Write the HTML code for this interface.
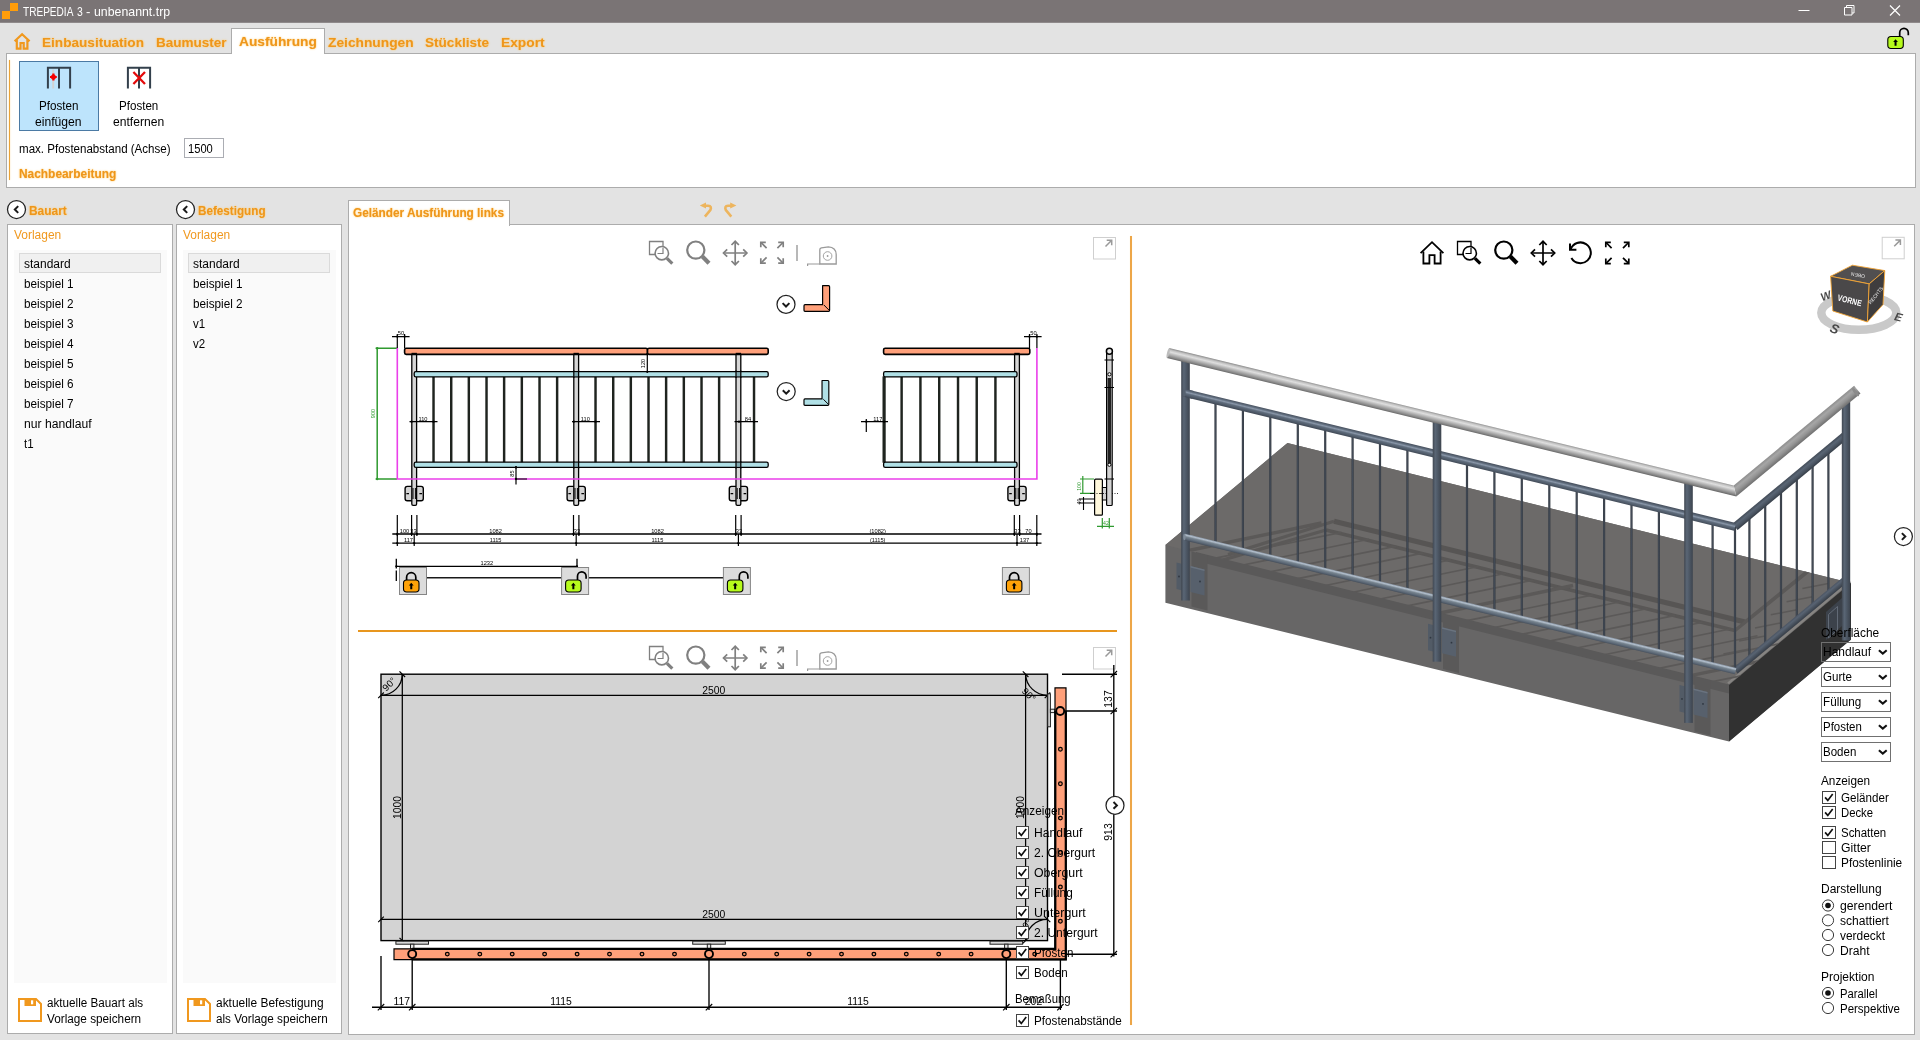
<!DOCTYPE html>
<html lang="de">
<head>
<meta charset="utf-8">
<title>TREPEDIA 3 - unbenannt.trp</title>
<style>
html,body{margin:0;padding:0;}
body{width:1920px;height:1040px;overflow:hidden;background:#e3e3e3;font-family:"Liberation Sans","DejaVu Sans",sans-serif;color:#000;}
#app{will-change:transform;position:relative;width:1920px;height:1040px;overflow:hidden;background:#e3e3e3;}
#app div,#app span.t,#app svg{position:absolute;box-sizing:border-box;}
span.t{white-space:pre;line-height:1;font-size:12px;transform-origin:0 0;}
.o{color:#f0981e;}
.ob{color:#ee961c;font-weight:700;text-shadow:0 0 2px rgba(255,200,100,.9),0 0 1px rgba(255,214,130,.7);}
.panel{background:#fff;border:1px solid #acacac;}
svg{overflow:visible;}
svg text{font-family:"Liberation Sans","DejaVu Sans",sans-serif;}

</style>
</head>
<body>
<div id="app">
<div style="left:0px;top:0px;width:1920px;height:23px;background:#7a7475;border-bottom:1px solid #8f8a8b;"></div>
<span class="t" style="left:23.4px;top:6px;font-size:12.7px;transform:scaleX(0.794);color:#ffffff;">TREPEDIA </span>
<span class="t" style="left:77px;top:6px;font-size:12.7px;transform:scaleX(0.821);color:#ffffff;">3 </span>
<span class="t" style="left:86.4px;top:6px;font-size:12.7px;transform:scaleX(1.04);color:#ffffff;">- </span>
<span class="t" style="left:93.8px;top:6px;font-size:12.7px;transform:scaleX(0.972);color:#ffffff;">unbenannt.trp</span>
<div class="panel" style="left:6px;top:53px;width:1910px;height:135px;"></div>
<div style="left:231px;top:28px;width:94px;height:26px;background:#fff;border:1px solid #acacac;border-bottom:none;"></div>
<span class="t ob" style="left:42px;top:36px;font-size:13.5px;transform:scaleX(1.007);">Einbausituation</span>
<span class="t ob" style="left:156.4px;top:36px;font-size:13.5px;transform:scaleX(1.001);">Baumuster</span>
<span class="t ob" style="left:239.1px;top:35px;font-size:13.5px;transform:scaleX(1.018);">Ausführung</span>
<span class="t ob" style="left:328.4px;top:36px;font-size:13.5px;transform:scaleX(1.019);">Zeichnungen</span>
<span class="t ob" style="left:425.4px;top:36px;font-size:13.5px;transform:scaleX(1.005);">Stückliste</span>
<span class="t ob" style="left:501.4px;top:36px;font-size:13.5px;transform:scaleX(1.02);">Export</span>
<div style="left:9px;top:60px;width:1.4px;height:120px;background:#eaa338;box-shadow:0 0 1.5px #f6d08a;"></div>
<div style="left:19px;top:61px;width:80px;height:70.4px;background:#bde4fc;border:1px solid #4b7aa4;"></div>
<span class="t" style="left:39px;top:100px;transform:scaleX(0.971);">Pfosten</span>
<span class="t" style="left:35.4px;top:116px;transform:scaleX(1.012);">einfügen</span>
<span class="t" style="left:119.2px;top:100px;transform:scaleX(0.966);">Pfosten</span>
<span class="t" style="left:113.2px;top:116px;transform:scaleX(1.01);">entfernen</span>
<span class="t" style="left:19px;top:143px;transform:scaleX(0.963);">max. Pfostenabstand (Achse)</span>
<div style="left:184px;top:138px;width:40px;height:20px;background:#fff;border:1px solid #abadb3;"></div>
<span class="t" style="left:187.7px;top:143px;transform:scaleX(0.929);">1500</span>
<span class="t ob" style="left:19px;top:168px;transform:scaleX(0.992);">Nachbearbeitung</span>
<span class="t ob" style="left:28.8px;top:205px;transform:scaleX(0.994);">Bauart</span>
<span class="t ob" style="left:197.8px;top:205px;transform:scaleX(0.974);">Befestigung</span>
<div class="panel" style="left:7px;top:224px;width:166px;height:810px;"></div>
<div style="left:13.5px;top:249.5px;width:153px;height:733px;background:#fafafa;"></div>
<div style="left:19px;top:253px;width:142px;height:20px;background:#f0f0f0;border:1px solid #dadada;"></div>
<span class="t o" style="left:13.8px;top:229px;transform:scaleX(0.996);">Vorlagen</span>
<span class="t" style="left:23.8px;top:258px;transform:scaleX(0.998);">standard</span>
<span class="t" style="left:23.8px;top:278px;transform:scaleX(0.978);">beispiel 1</span>
<span class="t" style="left:23.8px;top:298px;transform:scaleX(0.978);">beispiel 2</span>
<span class="t" style="left:23.8px;top:318px;transform:scaleX(0.978);">beispiel 3</span>
<span class="t" style="left:23.8px;top:338px;transform:scaleX(0.978);">beispiel 4</span>
<span class="t" style="left:23.8px;top:358px;transform:scaleX(0.978);">beispiel 5</span>
<span class="t" style="left:23.8px;top:378px;transform:scaleX(0.978);">beispiel 6</span>
<span class="t" style="left:23.8px;top:398px;transform:scaleX(0.978);">beispiel 7</span>
<span class="t" style="left:23.8px;top:418px;transform:scaleX(1.013);">nur handlauf</span>
<span class="t" style="left:23.8px;top:438px;transform:scaleX(0.96);">t1</span>
<span class="t" style="left:46.9px;top:997px;transform:scaleX(0.973);">aktuelle Bauart als</span>
<span class="t" style="left:46.9px;top:1013px;transform:scaleX(0.98);">Vorlage speichern</span>
<div class="panel" style="left:176px;top:224px;width:166px;height:810px;"></div>
<div style="left:182.5px;top:249.5px;width:153px;height:733px;background:#fafafa;"></div>
<div style="left:188px;top:253px;width:142px;height:20px;background:#f0f0f0;border:1px solid #dadada;"></div>
<span class="t o" style="left:182.8px;top:229px;transform:scaleX(0.996);">Vorlagen</span>
<span class="t" style="left:192.8px;top:258px;transform:scaleX(0.998);">standard</span>
<span class="t" style="left:192.8px;top:278px;transform:scaleX(0.978);">beispiel 1</span>
<span class="t" style="left:192.8px;top:298px;transform:scaleX(0.978);">beispiel 2</span>
<span class="t" style="left:192.8px;top:318px;transform:scaleX(0.96);">v1</span>
<span class="t" style="left:192.8px;top:338px;transform:scaleX(0.96);">v2</span>
<span class="t" style="left:215.7px;top:997px;transform:scaleX(0.995);">aktuelle Befestigung</span>
<span class="t" style="left:215.7px;top:1013px;transform:scaleX(0.974);">als Vorlage speichern</span>
<div class="panel" style="left:348px;top:224px;width:1567px;height:811px;"></div>
<div style="left:348px;top:200px;width:162px;height:26px;background:#fff;border:1px solid #acacac;border-bottom:none;"></div>
<span class="t ob" style="left:353px;top:207px;transform:scaleX(0.983);">Geländer Ausführung links</span>
<div style="left:358px;top:630px;width:759px;height:2px;background:#e8961e;"></div>
<div style="left:1130px;top:236px;width:2.4px;height:789px;background:#eda648;box-shadow:0 0 1px #fbe3b5;"></div>
<svg width="1920" height="1040" viewBox="0 0 1920 1040" style="left:0;top:0">
<rect x="10" y="3" width="8" height="8" fill="#ff9d0a"/><rect x="2" y="11" width="8" height="8" fill="#ff9d0a"/>
<g stroke="#fff" stroke-width="1" fill="none"><path d="M1798.5 10.5 h11"/><path d="M1844.5 7.5 h7.5 v7.5 h-7.5 z M1846.5 7.5 v-2 h7.5 v7.5 h-2"/><path d="M1890 5.5 l10 10 M1900 5.5 l-10 10" stroke-width="1.2"/></g>
<path d="M14.6 41.2 l7.5 -7 l7.5 7 M16.8 40 v8.6 h3.7 v-5.6 h3.2 v5.6 h3.7 v-8.6" fill="none" stroke="#f0981e" stroke-width="2.2" stroke-linejoin="miter"/>
<g stroke="#000" stroke-width="1.2" fill="none"><path d="M1899.7 37 v-4.3 a4.3 4.3 0 0 1 8.6 0 v2.6" stroke-width="1.7"/><rect x="1887.8" y="36.5" width="15.5" height="12" rx="3.2" fill="#b6fb1c" stroke-width="1.1"/><path d="M1895.55 39.3 l2.4 2.8 h-1.4 v3.6 h-2 v-3.6 h-1.4 z" fill="#000" stroke="none"/></g>
<path d="M53.2 69.5 v19" stroke="#d2d2d2" stroke-width="1.9"/><g fill="none" stroke="#33404c" stroke-width="2"><path d="M47.9 88.6 v-20.9 h22.2 v20.9 M59 67.7 v20.9"/></g><circle cx="53.4" cy="77" r="2.5" fill="#f40000"/><path d="M50 77 h6.8 M53.4 73.6 v6.8" stroke="#f40000" stroke-width="2.2"/>
<g fill="none" stroke="#33404c" stroke-width="2"><path d="M127.9 88.6 v-20.9 h22.2 v20.9 M139 67.7 v20.9"/></g><path d="M133.4 72 l11.6 12 M145 72 l-11.6 12" stroke="#e40a0a" stroke-width="2.3"/>
<circle cx="16.5" cy="209.5" r="9" fill="#fff" stroke="#222" stroke-width="1.25"/><path d="M18.2 206.1 l-3.4 3.4 l3.4 3.4" fill="none" stroke="#1a1a1a" stroke-width="2"/>
<circle cx="185.5" cy="209.5" r="9" fill="#fff" stroke="#222" stroke-width="1.25"/><path d="M187.2 206.1 l-3.4 3.4 l3.4 3.4" fill="none" stroke="#1a1a1a" stroke-width="2"/>
<g fill="none" stroke="#edb55e" stroke-width="2.6" stroke-linejoin="round"><path d="M704.5 205.7 H708.2 Q712.2 206 710.3 210.2 L704.9 216.6"/><path d="M731.7 205.7 H728 Q724 206 725.9 210.2 L731.3 216.6"/></g><path d="M699.8 205.6 L706 202.6 V208.6 Z M736.4 205.6 L730.2 202.6 V208.6 Z" fill="#edb55e"/>
<g fill="none" stroke="#f0981e" stroke-width="2"><path d="M19 999 h17 l5 5 v17 h-22 z"/></g><rect x="24.5" y="999" width="11.5" height="7" fill="#f0981e"/><rect x="31" y="1000.3" width="2.2" height="4" fill="#fff"/>
<g fill="none" stroke="#f0981e" stroke-width="2"><path d="M188 999 h17 l5 5 v17 h-22 z"/></g><rect x="193.5" y="999" width="11.5" height="7" fill="#f0981e"/><rect x="200" y="1000.3" width="2.2" height="4" fill="#fff"/>
</svg>
<svg width="1920" height="1040" viewBox="0 0 1920 1040" style="left:0;top:0">
<g transform="translate(0,0)" fill="none" stroke="#808080"><path d="M656 254.5 h-6.5 v-13 h13.5 v5.5" stroke-width="1.3"/><path d="M657.5 253.5 h5.5 v-5.5" stroke-width="1.2"/><circle cx="661.8" cy="253.2" r="6.7" stroke-width="1.6"/><path d="M667 258.4 l5.3 5.2" stroke-width="3.2"/><circle cx="695.8" cy="250.1" r="8.6" stroke-width="2.2"/><path d="M702.4 256.6 l6.6 6.6" stroke-width="4.2"/><path d="M723.6 253 h23.2 M735.2 241.4 v23.2" stroke-width="1.7"/><path d="M727.2 249.3 l-3.7 3.7 l3.7 3.7 M743.2 249.3 l3.7 3.7 l-3.7 3.7 M731.5 245 l3.7 -3.7 l3.7 3.7 M731.5 261 l3.7 3.7 l3.7 -3.7" stroke-width="1.7"/><path d="M761 242.5 l5.6 5.6 M783 242.5 l-5.6 5.6 M761 263 l5.6 -5.6 M783 263 l-5.6 -5.6" stroke-width="1.7"/><path d="M765.8 242.3 h-5 v5 M778.2 242.3 h5 v5 M765.8 263.2 h-5 v-5 M778.2 263.2 h5 v-5" stroke-width="1.7"/></g><g transform="translate(0,0)" fill="none" stroke="#9a9a9a"><path d="M797 245 v16" stroke-width="1.4"/><path d="M807.6 266 v-2 h12.2" stroke-width="1.2"/><path d="M819.8 264 v-14.2 q0 -1.6 1.6 -1.9 l7 -1 q7.5 .3 7.8 7.6 v9.5 z" stroke-width="1.3"/><circle cx="827.6" cy="256" r="4.3" stroke-width="0.9"/><circle cx="827.6" cy="256" r="0.9" fill="#9a9a9a" stroke="none"/></g>
<rect x="1093.5" y="237.5" width="22" height="21.5" fill="#fff" stroke="#cfcfcf" stroke-width="1"/><path d="M1105.5 246.5 l6.2 -6.2 M1106.7 240.3 h5 v5" fill="none" stroke="#9a9a9a" stroke-width="1.5"/>
<circle cx="786" cy="304.4" r="9" fill="#fff" stroke="#222" stroke-width="1.25"/><path d="M782.6 303.1 l3.4 3.4 l3.4 -3.4" fill="none" stroke="#1a1a1a" stroke-width="2"/>
<path d="M822.6 285.7 h6 q1 0 1 1 v23.6 q0 1 -1 1 h-23.6 q-1 0 -1 -1 v-4.6 q0 -1 1 -1 h17.6 z" fill="#ffa07a" stroke="#000" stroke-width="1.2" stroke-linejoin="round"/><path d="M823.9 305 l5.5 5.5" stroke="#000" stroke-width="1" fill="none"/>
<circle cx="786.2" cy="391.5" r="9" fill="#fff" stroke="#222" stroke-width="1.25"/><path d="M782.8 390.2 l3.4 3.4 l3.4 -3.4" fill="none" stroke="#1a1a1a" stroke-width="2"/>
<g transform="translate(803.6 380) scale(0.97)"><path d="M19 0.5 h6 q1 0 1 1 v23.6 q0 1 -1 1 h-23.6 q-1 0 -1 -1 v-4.6 q0 -1 1 -1 h17.6 z" fill="#b0e0e6" stroke="#000" stroke-width="1.2" stroke-linejoin="round"/><path d="M20.3 19.8 l5.5 5.5" stroke="#000" stroke-width="1" fill="none"/></g>
<g stroke="#2f9a2f" stroke-width="1.5" fill="none"><path d="M377.2 348 V479 M375.6 348.2 H397 M375.6 479 H397"/></g>
<circle cx="377.2" cy="348.2" r="1.2" fill="#2f9a2f"/><circle cx="377.2" cy="479" r="1.2" fill="#2f9a2f"/>
<text x="375.3" y="413.5" font-size="5.6" text-anchor="middle" fill="#2f9a2f" transform="rotate(-90 375.3 413.5)">900</text>
<g fill="#1f241f"><rect x="432.3" y="376.4" width="2.45" height="86.3"/><rect x="450.0" y="376.4" width="2.45" height="86.3"/><rect x="467.6" y="376.4" width="2.45" height="86.3"/><rect x="485.3" y="376.4" width="2.45" height="86.3"/><rect x="502.9" y="376.4" width="2.45" height="86.3"/><rect x="520.6" y="376.4" width="2.45" height="86.3"/><rect x="538.3" y="376.4" width="2.45" height="86.3"/><rect x="555.9" y="376.4" width="2.45" height="86.3"/><rect x="594.3" y="376.4" width="2.45" height="86.3"/><rect x="612.0" y="376.4" width="2.45" height="86.3"/><rect x="629.6" y="376.4" width="2.45" height="86.3"/><rect x="647.3" y="376.4" width="2.45" height="86.3"/><rect x="664.9" y="376.4" width="2.45" height="86.3"/><rect x="682.6" y="376.4" width="2.45" height="86.3"/><rect x="700.3" y="376.4" width="2.45" height="86.3"/><rect x="717.9" y="376.4" width="2.45" height="86.3"/><rect x="752.8" y="376.4" width="2.45" height="86.3"/><rect x="900.4" y="376.4" width="2.45" height="86.3"/><rect x="919.2" y="376.4" width="2.45" height="86.3"/><rect x="938.0" y="376.4" width="2.45" height="86.3"/><rect x="956.8" y="376.4" width="2.45" height="86.3"/><rect x="975.5" y="376.4" width="2.45" height="86.3"/><rect x="994.2" y="376.4" width="2.45" height="86.3"/><rect x="882.5" y="376.4" width="3.2" height="86.3"/></g>
<rect x="405.1" y="486.4" width="18.2" height="14.4" rx="2.2" fill="#d3d3d3" stroke="#000" stroke-width="1.4"/>
<path d="M406.4 493.6 h2.6 M419.4 493.6 h2.6" stroke="#000" stroke-width="1.3"/>
<rect x="567.1" y="486.4" width="18.2" height="14.4" rx="2.2" fill="#d3d3d3" stroke="#000" stroke-width="1.4"/>
<path d="M568.4 493.6 h2.6 M581.4 493.6 h2.6" stroke="#000" stroke-width="1.3"/>
<rect x="729.3" y="486.4" width="18.2" height="14.4" rx="2.2" fill="#d3d3d3" stroke="#000" stroke-width="1.4"/>
<path d="M730.6 493.6 h2.6 M743.6 493.6 h2.6" stroke="#000" stroke-width="1.3"/>
<rect x="1007.9" y="486.4" width="18.2" height="14.4" rx="2.2" fill="#d3d3d3" stroke="#000" stroke-width="1.4"/>
<path d="M1009.2 493.6 h2.6 M1022.2 493.6 h2.6" stroke="#000" stroke-width="1.3"/>
<path d="M411.8 353 V504 q0 1.3 1.3 1.3 h2.2 q1.3 0 1.3 -1.3 V353 z" fill="#d6d6d6" stroke="#000" stroke-width="1.3"/>
<path d="M413.0 488 v11 M415.4 488 v11" stroke="#000" stroke-width="1" fill="none"/>
<path d="M573.8 353 V504 q0 1.3 1.3 1.3 h2.2 q1.3 0 1.3 -1.3 V353 z" fill="#d6d6d6" stroke="#000" stroke-width="1.3"/>
<path d="M575.0 488 v11 M577.4 488 v11" stroke="#000" stroke-width="1" fill="none"/>
<path d="M736.0 353 V504 q0 1.3 1.3 1.3 h2.2 q1.3 0 1.3 -1.3 V353 z" fill="#d6d6d6" stroke="#000" stroke-width="1.3"/>
<path d="M737.2 488 v11 M739.6 488 v11" stroke="#000" stroke-width="1" fill="none"/>
<path d="M1014.6 353 V504 q0 1.3 1.3 1.3 h2.2 q1.3 0 1.3 -1.3 V353 z" fill="#d6d6d6" stroke="#000" stroke-width="1.3"/>
<path d="M1015.8 488 v11 M1018.2 488 v11" stroke="#000" stroke-width="1" fill="none"/>
<path d="M397.3 348 V479 H1036.9 V348" fill="none" stroke="#ea3fea" stroke-width="1.6"/>
<rect x="414.2" y="371.6" width="354.0" height="5.3" rx="1.6" fill="#b0e0e6" stroke="#000" stroke-width="1.3"/>
<rect x="883.6" y="371.6" width="133.4" height="5.3" rx="1.6" fill="#b0e0e6" stroke="#000" stroke-width="1.3"/>
<rect x="414.2" y="462.2" width="354.0" height="5.2" rx="1.6" fill="#b0e0e6" stroke="#000" stroke-width="1.3"/>
<rect x="883.6" y="462.2" width="133.4" height="5.2" rx="1.6" fill="#b0e0e6" stroke="#000" stroke-width="1.3"/>
<rect x="573.9" y="372.2" width="4.6" height="4.1" fill="#5d7f86" opacity="0.55"/>
<path d="M573.8 370.6 V377.9 M578.6 370.6 V377.9" stroke="#000" stroke-width="1.25" fill="none"/>
<rect x="573.9" y="462.8" width="4.6" height="4" fill="#5d7f86" opacity="0.55"/>
<path d="M573.8 461.2 V468.4 M578.6 461.2 V468.4" stroke="#000" stroke-width="1.25" fill="none"/>
<rect x="736.1" y="372.2" width="4.6" height="4.1" fill="#5d7f86" opacity="0.55"/>
<path d="M736.0 370.6 V377.9 M740.8 370.6 V377.9" stroke="#000" stroke-width="1.25" fill="none"/>
<rect x="736.1" y="462.8" width="4.6" height="4" fill="#5d7f86" opacity="0.55"/>
<path d="M736.0 461.2 V468.4 M740.8 461.2 V468.4" stroke="#000" stroke-width="1.25" fill="none"/>
<rect x="404.6" y="348.2" width="242.9" height="6.2" rx="1.6" fill="#ffa07a" stroke="#000" stroke-width="1.6"/>
<rect x="647.5" y="348.2" width="120.7" height="6.2" rx="1.6" fill="#ffa07a" stroke="#000" stroke-width="1.6"/>
<rect x="883.6" y="348.2" width="146.2" height="6.2" rx="1.6" fill="#ffa07a" stroke="#000" stroke-width="1.6"/>
<path d="M411.5 353.6 h5.4" stroke="#000" stroke-width="1.6"/>
<path d="M573.5 353.6 h5.4" stroke="#000" stroke-width="1.6"/>
<path d="M735.7 353.6 h5.4" stroke="#000" stroke-width="1.6"/>
<path d="M1014.3 353.6 h5.4" stroke="#000" stroke-width="1.6"/>
<g stroke="#000" stroke-width="1.2" fill="none"><path d="M392 336.6 H409.6 M397.3 334 V348 M404.6 334 V348"/><path d="M1024 336.6 H1041.6 M1029.5 334 V348 M1036.9 334 V348"/><path d="M409.5 421.7 H437.5 M572 421.7 H600 M734.5 421.7 H758 M861 421.7 H888 M866.3 419 V432"/><path d="M647.3 354 V372.5 M516 466 V484.5 M516 479 H527"/><path d="M392.3 534 H1041.5 M392.3 543.2 H1041.5" stroke-width="1.3"/><path d="M397.3 515 V536 M411.6 515 V536 M416.9 515 V536 M573.5 515 V536 M578.9 515 V536 M735.7 515 V536 M741.1 515 V536 M1014.3 515 V536 M1019.6 515 V536 M1036.8 515 V536"/><path d="M397.3 534 V546 M414.2 534 V546 M576.2 534 V546 M738.4 534 V546 M1017.0 534 V546 M1036.8 534 V546"/><path d="M396.3 566.3 H577.2 M396.3 558.8 V568.5 M577 558.8 V568.5 M396.3 570.5 V581" stroke-width="1.3"/></g>
<g fill="#000"><circle cx="397.3" cy="336.6" r="1.15"/><circle cx="404.6" cy="336.6" r="1.15"/><circle cx="1029.5" cy="336.6" r="1.15"/><circle cx="1036.9" cy="336.6" r="1.15"/><circle cx="411.6" cy="421.7" r="1.15"/><circle cx="433.5" cy="421.7" r="1.15"/><circle cx="573.8" cy="421.7" r="1.15"/><circle cx="595.5" cy="421.7" r="1.15"/><circle cx="739.0" cy="421.7" r="1.15"/><circle cx="754.0" cy="421.7" r="1.15"/><circle cx="866.3" cy="421.7" r="1.15"/><circle cx="884.1" cy="421.7" r="1.15"/><circle cx="647.3" cy="354.6" r="1.15"/><circle cx="647.3" cy="371.8" r="1.15"/><circle cx="516.0" cy="467.5" r="1.15"/><circle cx="516.0" cy="479.0" r="1.15"/><circle cx="397.3" cy="534.0" r="1.15"/><circle cx="411.6" cy="534.0" r="1.15"/><circle cx="416.9" cy="534.0" r="1.15"/><circle cx="573.5" cy="534.0" r="1.15"/><circle cx="578.9" cy="534.0" r="1.15"/><circle cx="735.7" cy="534.0" r="1.15"/><circle cx="741.1" cy="534.0" r="1.15"/><circle cx="1014.3" cy="534.0" r="1.15"/><circle cx="1019.6" cy="534.0" r="1.15"/><circle cx="1036.8" cy="534.0" r="1.15"/><circle cx="397.3" cy="543.2" r="1.15"/><circle cx="414.2" cy="543.2" r="1.15"/><circle cx="576.2" cy="543.2" r="1.15"/><circle cx="738.4" cy="543.2" r="1.15"/><circle cx="1017.0" cy="543.2" r="1.15"/><circle cx="1036.8" cy="543.2" r="1.15"/><circle cx="396.3" cy="566.3" r="1.15"/><circle cx="577.0" cy="566.3" r="1.15"/></g>
<g><text x="401" y="335" font-size="5.7" text-anchor="middle" fill="#000">50</text><text x="1033.4" y="335" font-size="5.7" text-anchor="middle" fill="#000">50</text><text x="423" y="420.5" font-size="5.7" text-anchor="middle" fill="#000">110</text><text x="585.3" y="420.5" font-size="5.7" text-anchor="middle" fill="#000">110</text><text x="748" y="420.5" font-size="5.7" text-anchor="middle" fill="#000">84</text><text x="877.8" y="420.5" font-size="5.7" text-anchor="middle" fill="#000">117</text><text x="645.4" y="363.5" font-size="5.6" text-anchor="middle" fill="#000" transform="rotate(-90 645.4 363.5)">120</text><text x="514" y="473.5" font-size="5.6" text-anchor="middle" fill="#000" transform="rotate(-90 514 473.5)">85</text><text x="404.5" y="533" font-size="5.7" text-anchor="middle" fill="#000">100</text><text x="413.5" y="533" font-size="5.7" text-anchor="middle" fill="#000">33</text><text x="495.6" y="533" font-size="5.7" text-anchor="middle" fill="#000">1082</text><text x="577" y="533" font-size="5.7" text-anchor="middle" fill="#000">33</text><text x="657.5" y="533" font-size="5.7" text-anchor="middle" fill="#000">1082</text><text x="739" y="533" font-size="5.7" text-anchor="middle" fill="#000">33</text><text x="877.7" y="533" font-size="5.7" text-anchor="middle" fill="#000">(1082)</text><text x="1017.5" y="533" font-size="5.7" text-anchor="middle" fill="#000">33</text><text x="1028.5" y="533" font-size="5.7" text-anchor="middle" fill="#000">70</text><text x="408.5" y="542.2" font-size="5.7" text-anchor="middle" fill="#000">117</text><text x="495.6" y="542.2" font-size="5.7" text-anchor="middle" fill="#000">1115</text><text x="657.5" y="542.2" font-size="5.7" text-anchor="middle" fill="#000">1115</text><text x="877.7" y="542.2" font-size="5.7" text-anchor="middle" fill="#000">(1115)</text><text x="1024.5" y="542.2" font-size="5.7" text-anchor="middle" fill="#000">137</text><text x="486.8" y="565.2" font-size="5.7" text-anchor="middle" fill="#000">1232</text></g>
<path d="M426.5 577.7 H561.5 M588.8 577.7 H723.5" stroke="#1a1a1a" stroke-width="1.35" fill="none"/>
<rect x="399.5" y="567.5" width="27" height="27" fill="#dcdcdc" stroke="#858585" stroke-width="1"/>
<g stroke="#000" stroke-width="1.2" fill="none"><path d="M406.6 580.5 v-3.2 a4.6 4.6 0 0 1 9.2 0 v3.2" stroke-width="1.7"/><rect x="403.5" y="580" width="15.5" height="12" rx="3.2" fill="#ffa208" stroke-width="1.1"/><path d="M411.25 582.8 l2.4 2.8 h-1.4 v3.6 h-2 v-3.6 h-1.4 z" fill="#000" stroke="none"/></g>
<rect x="561.6" y="567.5" width="27" height="27" fill="#dcdcdc" stroke="#858585" stroke-width="1"/>
<g stroke="#000" stroke-width="1.2" fill="none"><path d="M577.5 580.5 v-4.3 a4.3 4.3 0 0 1 8.6 0 v2.6" stroke-width="1.7"/><rect x="565.6" y="580" width="15.5" height="12" rx="3.2" fill="#b6fb1c" stroke-width="1.1"/><path d="M573.35 582.8 l2.4 2.8 h-1.4 v3.6 h-2 v-3.6 h-1.4 z" fill="#000" stroke="none"/></g>
<rect x="723.4" y="567.5" width="27" height="27" fill="#dcdcdc" stroke="#858585" stroke-width="1"/>
<g stroke="#000" stroke-width="1.2" fill="none"><path d="M739.3 580.5 v-4.3 a4.3 4.3 0 0 1 8.6 0 v2.6" stroke-width="1.7"/><rect x="727.4" y="580" width="15.5" height="12" rx="3.2" fill="#b6fb1c" stroke-width="1.1"/><path d="M735.15 582.8 l2.4 2.8 h-1.4 v3.6 h-2 v-3.6 h-1.4 z" fill="#000" stroke="none"/></g>
<rect x="1002.4" y="567.5" width="27" height="27" fill="#dcdcdc" stroke="#858585" stroke-width="1"/>
<g stroke="#000" stroke-width="1.2" fill="none"><path d="M1009.5 580.5 v-3.2 a4.6 4.6 0 0 1 9.2 0 v3.2" stroke-width="1.7"/><rect x="1006.4" y="580" width="15.5" height="12" rx="3.2" fill="#ffa208" stroke-width="1.1"/><path d="M1014.15 582.8 l2.4 2.8 h-1.4 v3.6 h-2 v-3.6 h-1.4 z" fill="#000" stroke="none"/></g>
<g stroke="#2f9a2f" stroke-width="1.2" fill="none"><path d="M1082.8 476 V494 M1080 479 H1094 M1080 493.3 H1094 M1097 526.3 H1114 M1102.3 518 V528.5 M1109.3 518 V528.5"/></g><text x="1081" y="486.5" font-size="5.2" text-anchor="middle" fill="#2f9a2f" transform="rotate(-90 1081 486.5)">100</text><text x="1106" y="525.3" font-size="5.2" text-anchor="middle" fill="#2f9a2f">42</text><g stroke="#000" stroke-width="1.1" fill="none"><path d="M1079 499 H1094 M1079 503 H1094 M1083.5 497 V510"/></g><text x="1081" y="501.5" font-size="5.2" text-anchor="middle" fill="#000" transform="rotate(-90 1081 501.5)">40</text><rect x="1094.6" y="479.2" width="7.8" height="36" rx="1" fill="#fff8dc" stroke="#000" stroke-width="1.2"/><rect x="1102.4" y="487.5" width="4.2" height="12.5" fill="#d3d3d3" stroke="#000" stroke-width="1"/><path d="M1090 493.5 H1118" stroke="#000" stroke-width="0.8" stroke-dasharray="5 1.5 1 1.5"/><rect x="1106.6" y="352" width="5.6" height="153.5" rx="1" fill="#d3d3d3" stroke="#000" stroke-width="1.2"/><rect x="1107.6" y="378" width="3.4" height="86" fill="#222"/><circle cx="1109.4" cy="351.3" r="3" fill="#e8e8e8" stroke="#000" stroke-width="1.5"/><circle cx="1109.4" cy="374.3" r="1.6" fill="#fff" stroke="#000" stroke-width="1"/><circle cx="1109.4" cy="464.8" r="1.6" fill="#fff" stroke="#000" stroke-width="1"/><path d="M1104.5 360 H1114 M1104.5 387.5 H1114 M1104.5 479 H1114" stroke="#000" stroke-width="1.1"/>
</svg>
<svg width="1920" height="1040" viewBox="0 0 1920 1040" style="left:0;top:0">
<g transform="translate(0,405)" fill="none" stroke="#808080"><path d="M656 254.5 h-6.5 v-13 h13.5 v5.5" stroke-width="1.3"/><path d="M657.5 253.5 h5.5 v-5.5" stroke-width="1.2"/><circle cx="661.8" cy="253.2" r="6.7" stroke-width="1.6"/><path d="M667 258.4 l5.3 5.2" stroke-width="3.2"/><circle cx="695.8" cy="250.1" r="8.6" stroke-width="2.2"/><path d="M702.4 256.6 l6.6 6.6" stroke-width="4.2"/><path d="M723.6 253 h23.2 M735.2 241.4 v23.2" stroke-width="1.7"/><path d="M727.2 249.3 l-3.7 3.7 l3.7 3.7 M743.2 249.3 l3.7 3.7 l-3.7 3.7 M731.5 245 l3.7 -3.7 l3.7 3.7 M731.5 261 l3.7 3.7 l3.7 -3.7" stroke-width="1.7"/><path d="M761 242.5 l5.6 5.6 M783 242.5 l-5.6 5.6 M761 263 l5.6 -5.6 M783 263 l-5.6 -5.6" stroke-width="1.7"/><path d="M765.8 242.3 h-5 v5 M778.2 242.3 h5 v5 M765.8 263.2 h-5 v-5 M778.2 263.2 h5 v-5" stroke-width="1.7"/></g><g transform="translate(0,405)" fill="none" stroke="#9a9a9a"><path d="M797 245 v16" stroke-width="1.4"/><path d="M807.6 266 v-2 h12.2" stroke-width="1.2"/><path d="M819.8 264 v-14.2 q0 -1.6 1.6 -1.9 l7 -1 q7.5 .3 7.8 7.6 v9.5 z" stroke-width="1.3"/><circle cx="827.6" cy="256" r="4.3" stroke-width="0.9"/><circle cx="827.6" cy="256" r="0.9" fill="#9a9a9a" stroke="none"/></g>
<rect x="1093.5" y="647.5" width="22" height="21.5" fill="#fff" stroke="#cfcfcf" stroke-width="1"/><path d="M1105.5 656.5 l6.2 -6.2 M1106.7 650.3 h5 v5" fill="none" stroke="#9a9a9a" stroke-width="1.5"/>
<rect x="381" y="674.2" width="666.5" height="266.4" fill="#d3d3d3" stroke="#000" stroke-width="1.4"/>
<g stroke="#000" stroke-width="1.25" fill="none"><path d="M381 695.3 H1047.5 M381 919.4 H1047.5 M402.3 674.2 V940.6 M1025.6 674.2 V940.6"/><path d="M381 695.3 A21.3 21.3 0 0 0 402.3 674.2"/><path d="M1025.6 674.2 A21.9 21.9 0 0 0 1047.5 695.3"/><path d="M1047.5 919.4 A21.9 21.9 0 0 0 1025.6 940.6"/></g>
<path d="M378.2 698.1 l5.6 -5.6" stroke="#000" stroke-width="1.15" fill="none"/>
<path d="M399.5 671.4 l5.6 5.6" stroke="#000" stroke-width="1.15" fill="none"/>
<path d="M1022.8 671.4 l5.6 5.6" stroke="#000" stroke-width="1.15" fill="none"/>
<path d="M1044.7 698.1 l5.6 -5.6" stroke="#000" stroke-width="1.15" fill="none"/>
<path d="M378.2 922.2 l5.6 -5.6" stroke="#000" stroke-width="1.15" fill="none"/>
<path d="M1044.7 916.6 l5.6 5.6" stroke="#000" stroke-width="1.15" fill="none"/>
<path d="M399.5 937.8 l5.6 5.6" stroke="#000" stroke-width="1.15" fill="none"/>
<path d="M1022.8 943.4 l5.6 -5.6" stroke="#000" stroke-width="1.15" fill="none"/>
<text x="713.8" y="693.6" font-size="10.4" text-anchor="middle" fill="#000">2500</text>
<text x="713.8" y="917.6" font-size="10.4" text-anchor="middle" fill="#000">2500</text>
<text x="400.6" y="807.5" font-size="10.4" text-anchor="middle" fill="#000" transform="rotate(-90 400.6 807.5)">1000</text>
<text x="1023.8" y="807.5" font-size="10.4" text-anchor="middle" fill="#000" transform="rotate(-90 1023.8 807.5)">1000</text>
<text x="391.5" y="686.5" font-size="9.6" text-anchor="middle" fill="#000" transform="rotate(-45 391.5 686.5)">90°</text>
<text x="1026.5" y="697" font-size="9.6" text-anchor="middle" fill="#000" transform="rotate(45 1026.5 697)">90°</text>
<text x="1027.5" y="928.5" font-size="9.6" text-anchor="middle" fill="#000" transform="rotate(-45 1027.5 928.5)">90°</text>
<rect x="395.9" y="941.2" width="32.6" height="3" fill="#d9d9d9" stroke="#222" stroke-width="1"/>
<rect x="410.5" y="944.2" width="3.4" height="4.4" fill="#e6e6e6" stroke="#222" stroke-width="1"/>
<rect x="692.7" y="941.2" width="32.6" height="3" fill="#d9d9d9" stroke="#222" stroke-width="1"/>
<rect x="707.3" y="944.2" width="3.4" height="4.4" fill="#e6e6e6" stroke="#222" stroke-width="1"/>
<rect x="990.0" y="941.2" width="32.6" height="3" fill="#d9d9d9" stroke="#222" stroke-width="1"/>
<rect x="1004.6" y="944.2" width="3.4" height="4.4" fill="#e6e6e6" stroke="#222" stroke-width="1"/>
<rect x="1047.8" y="693.8" width="2.6" height="33" fill="#d9d9d9" stroke="#222" stroke-width="1"/>
<rect x="1050.4" y="709.2" width="4.4" height="3.4" fill="#e6e6e6" stroke="#222" stroke-width="1"/>
<path d="M394 948.8 H1055 V687.8 H1066 V959.6 H394 Z" fill="#ffa07a" stroke="#000" stroke-width="1.2" stroke-linejoin="miter"/>
<path d="M412.2 948.9 H1055.3 V711 M412.2 959.4 H1065.8 V711" fill="none" stroke="#000" stroke-width="2.2"/>
<g fill="#f08a60" stroke="#000" stroke-width="1.25"><circle cx="447.3" cy="954.1" r="1.85"/><circle cx="479.8" cy="954.1" r="1.85"/><circle cx="512.2" cy="954.1" r="1.85"/><circle cx="544.6" cy="954.1" r="1.85"/><circle cx="577.1" cy="954.1" r="1.85"/><circle cx="609.5" cy="954.1" r="1.85"/><circle cx="642.0" cy="954.1" r="1.85"/><circle cx="674.5" cy="954.1" r="1.85"/><circle cx="744.3" cy="954.1" r="1.85"/><circle cx="776.7" cy="954.1" r="1.85"/><circle cx="809.1" cy="954.1" r="1.85"/><circle cx="841.5" cy="954.1" r="1.85"/><circle cx="873.9" cy="954.1" r="1.85"/><circle cx="906.3" cy="954.1" r="1.85"/><circle cx="938.7" cy="954.1" r="1.85"/><circle cx="971.1" cy="954.1" r="1.85"/><circle cx="1034.7" cy="954.1" r="1.85"/><circle cx="1060.4" cy="749.3" r="1.85"/><circle cx="1060.4" cy="783.7" r="1.85"/><circle cx="1060.4" cy="818.1" r="1.85"/><circle cx="1060.4" cy="852.5" r="1.85"/><circle cx="1060.4" cy="886.9" r="1.85"/><circle cx="1060.4" cy="921.3" r="1.85"/></g>
<circle cx="412.2" cy="954.1" r="4" fill="#ffa07a" stroke="#000" stroke-width="1.9"/>
<circle cx="709.0" cy="954.1" r="4" fill="#ffa07a" stroke="#000" stroke-width="1.9"/>
<circle cx="1006.3" cy="954.1" r="4" fill="#ffa07a" stroke="#000" stroke-width="1.9"/>
<circle cx="1060.2" cy="711.0" r="4" fill="#ffa07a" stroke="#000" stroke-width="1.9"/>
<g stroke="#000" stroke-width="1.35" fill="none"><path d="M372 1007.2 H1062 M381 956 V1010 M412.2 958 V1010 M709 958 V1010 M1006.3 958 V1010 M1060.4 960 V1010"/><path d="M1113.8 665 V956.5 M1062 674.2 H1117 M1064 711 H1117 M1066 954.2 H1117"/></g>
<path d="M377.8 1010.4 l6.4 -6.4" stroke="#000" stroke-width="1.15" fill="none"/>
<path d="M409.0 1010.4 l6.4 -6.4" stroke="#000" stroke-width="1.15" fill="none"/>
<path d="M705.8 1010.4 l6.4 -6.4" stroke="#000" stroke-width="1.15" fill="none"/>
<path d="M1003.1 1010.4 l6.4 -6.4" stroke="#000" stroke-width="1.15" fill="none"/>
<path d="M1057.2 1010.4 l6.4 -6.4" stroke="#000" stroke-width="1.15" fill="none"/>
<path d="M1110.6 677.4 l6.4 -6.4" stroke="#000" stroke-width="1.15" fill="none"/>
<path d="M1110.6 714.2 l6.4 -6.4" stroke="#000" stroke-width="1.15" fill="none"/>
<path d="M1110.6 957.4 l6.4 -6.4" stroke="#000" stroke-width="1.15" fill="none"/>
<text x="401.8" y="1005" font-size="10.4" text-anchor="middle" fill="#000">117</text>
<text x="561" y="1005" font-size="10.4" text-anchor="middle" fill="#000">1115</text>
<text x="858" y="1005" font-size="10.4" text-anchor="middle" fill="#000">1115</text>
<text x="1033.5" y="1005" font-size="10.4" text-anchor="middle" fill="#000">202</text>
<text x="1112" y="699" font-size="10.4" text-anchor="middle" fill="#000" transform="rotate(-90 1112 699)">137</text>
<text x="1112" y="832" font-size="10.4" text-anchor="middle" fill="#000" transform="rotate(-90 1112 832)">913</text>
</svg>
<svg width="1920" height="1040" viewBox="0 0 1920 1040" style="left:0;top:0">
<defs><clipPath id="cTop"><polygon points="1165.4,545.0 1287.5,443.0 1851.0,583.0 1729.0,685.0"/></clipPath><clipPath id="cFront"><polygon points="1165.4,545.0 1729.0,685.0 1729.0,741.5 1165.4,602.7"/></clipPath><linearGradient id="g1" gradientUnits="userSpaceOnUse" x1="1748.30" y1="0" x2="1750.50" y2="0"><stop offset="0" stop-color="#353b44"/><stop offset="0.45" stop-color="#434b56"/><stop offset="1" stop-color="#333941"/></linearGradient><linearGradient id="g2" gradientUnits="userSpaceOnUse" x1="1764.10" y1="0" x2="1766.30" y2="0"><stop offset="0" stop-color="#353b44"/><stop offset="0.45" stop-color="#434b56"/><stop offset="1" stop-color="#333941"/></linearGradient><linearGradient id="g3" gradientUnits="userSpaceOnUse" x1="1779.90" y1="0" x2="1782.10" y2="0"><stop offset="0" stop-color="#353b44"/><stop offset="0.45" stop-color="#434b56"/><stop offset="1" stop-color="#333941"/></linearGradient><linearGradient id="g4" gradientUnits="userSpaceOnUse" x1="1795.70" y1="0" x2="1797.90" y2="0"><stop offset="0" stop-color="#353b44"/><stop offset="0.45" stop-color="#434b56"/><stop offset="1" stop-color="#333941"/></linearGradient><linearGradient id="g5" gradientUnits="userSpaceOnUse" x1="1811.50" y1="0" x2="1813.70" y2="0"><stop offset="0" stop-color="#353b44"/><stop offset="0.45" stop-color="#434b56"/><stop offset="1" stop-color="#333941"/></linearGradient><linearGradient id="g6" gradientUnits="userSpaceOnUse" x1="1827.30" y1="0" x2="1829.50" y2="0"><stop offset="0" stop-color="#353b44"/><stop offset="0.45" stop-color="#434b56"/><stop offset="1" stop-color="#333941"/></linearGradient><linearGradient id="g7" gradientUnits="userSpaceOnUse" x1="1737.47" y1="673.37" x2="1733.13" y2="668.13"><stop offset="0" stop-color="#373e48"/><stop offset="0.3" stop-color="#454e5a"/><stop offset="0.7" stop-color="#586372"/><stop offset="1" stop-color="#4c5563"/></linearGradient><linearGradient id="g8" gradientUnits="userSpaceOnUse" x1="1737.55" y1="529.88" x2="1732.45" y2="523.72"><stop offset="0" stop-color="#373f49"/><stop offset="0.3" stop-color="#4a5461"/><stop offset="0.65" stop-color="#596574"/><stop offset="1" stop-color="#434c58"/></linearGradient><linearGradient id="g9" gradientUnits="userSpaceOnUse" x1="1841.80" y1="0" x2="1850.20" y2="0"><stop offset="0" stop-color="#404751"/><stop offset="0.3" stop-color="#5a6675"/><stop offset="0.55" stop-color="#4f5a68"/><stop offset="1" stop-color="#3d444e"/></linearGradient><linearGradient id="g10" gradientUnits="userSpaceOnUse" x1="1214.40" y1="0" x2="1216.60" y2="0"><stop offset="0" stop-color="#353b44"/><stop offset="0.45" stop-color="#444c58"/><stop offset="1" stop-color="#333941"/></linearGradient><linearGradient id="g11" gradientUnits="userSpaceOnUse" x1="1241.82" y1="0" x2="1244.02" y2="0"><stop offset="0" stop-color="#353b44"/><stop offset="0.45" stop-color="#444c58"/><stop offset="1" stop-color="#333941"/></linearGradient><linearGradient id="g12" gradientUnits="userSpaceOnUse" x1="1269.24" y1="0" x2="1271.44" y2="0"><stop offset="0" stop-color="#353b44"/><stop offset="0.45" stop-color="#444c58"/><stop offset="1" stop-color="#333941"/></linearGradient><linearGradient id="g13" gradientUnits="userSpaceOnUse" x1="1296.66" y1="0" x2="1298.86" y2="0"><stop offset="0" stop-color="#353b44"/><stop offset="0.45" stop-color="#444c58"/><stop offset="1" stop-color="#333941"/></linearGradient><linearGradient id="g14" gradientUnits="userSpaceOnUse" x1="1324.08" y1="0" x2="1326.28" y2="0"><stop offset="0" stop-color="#353b44"/><stop offset="0.45" stop-color="#444c58"/><stop offset="1" stop-color="#333941"/></linearGradient><linearGradient id="g15" gradientUnits="userSpaceOnUse" x1="1351.50" y1="0" x2="1353.70" y2="0"><stop offset="0" stop-color="#353b44"/><stop offset="0.45" stop-color="#444c58"/><stop offset="1" stop-color="#333941"/></linearGradient><linearGradient id="g16" gradientUnits="userSpaceOnUse" x1="1378.92" y1="0" x2="1381.12" y2="0"><stop offset="0" stop-color="#353b44"/><stop offset="0.45" stop-color="#444c58"/><stop offset="1" stop-color="#333941"/></linearGradient><linearGradient id="g17" gradientUnits="userSpaceOnUse" x1="1406.34" y1="0" x2="1408.54" y2="0"><stop offset="0" stop-color="#353b44"/><stop offset="0.45" stop-color="#444c58"/><stop offset="1" stop-color="#333941"/></linearGradient><linearGradient id="g18" gradientUnits="userSpaceOnUse" x1="1465.90" y1="0" x2="1468.10" y2="0"><stop offset="0" stop-color="#353b44"/><stop offset="0.45" stop-color="#444c58"/><stop offset="1" stop-color="#333941"/></linearGradient><linearGradient id="g19" gradientUnits="userSpaceOnUse" x1="1493.32" y1="0" x2="1495.52" y2="0"><stop offset="0" stop-color="#353b44"/><stop offset="0.45" stop-color="#444c58"/><stop offset="1" stop-color="#333941"/></linearGradient><linearGradient id="g20" gradientUnits="userSpaceOnUse" x1="1520.74" y1="0" x2="1522.94" y2="0"><stop offset="0" stop-color="#353b44"/><stop offset="0.45" stop-color="#444c58"/><stop offset="1" stop-color="#333941"/></linearGradient><linearGradient id="g21" gradientUnits="userSpaceOnUse" x1="1548.16" y1="0" x2="1550.36" y2="0"><stop offset="0" stop-color="#353b44"/><stop offset="0.45" stop-color="#444c58"/><stop offset="1" stop-color="#333941"/></linearGradient><linearGradient id="g22" gradientUnits="userSpaceOnUse" x1="1575.58" y1="0" x2="1577.78" y2="0"><stop offset="0" stop-color="#353b44"/><stop offset="0.45" stop-color="#444c58"/><stop offset="1" stop-color="#333941"/></linearGradient><linearGradient id="g23" gradientUnits="userSpaceOnUse" x1="1603.00" y1="0" x2="1605.20" y2="0"><stop offset="0" stop-color="#353b44"/><stop offset="0.45" stop-color="#444c58"/><stop offset="1" stop-color="#333941"/></linearGradient><linearGradient id="g24" gradientUnits="userSpaceOnUse" x1="1630.42" y1="0" x2="1632.62" y2="0"><stop offset="0" stop-color="#353b44"/><stop offset="0.45" stop-color="#444c58"/><stop offset="1" stop-color="#333941"/></linearGradient><linearGradient id="g25" gradientUnits="userSpaceOnUse" x1="1657.84" y1="0" x2="1660.04" y2="0"><stop offset="0" stop-color="#353b44"/><stop offset="0.45" stop-color="#444c58"/><stop offset="1" stop-color="#333941"/></linearGradient><linearGradient id="g26" gradientUnits="userSpaceOnUse" x1="1711.50" y1="0" x2="1713.70" y2="0"><stop offset="0" stop-color="#353b44"/><stop offset="0.45" stop-color="#444c58"/><stop offset="1" stop-color="#333941"/></linearGradient><linearGradient id="g27" gradientUnits="userSpaceOnUse" x1="1733.90" y1="0" x2="1736.10" y2="0"><stop offset="0" stop-color="#353b44"/><stop offset="0.45" stop-color="#444c58"/><stop offset="1" stop-color="#333941"/></linearGradient><linearGradient id="g28" gradientUnits="userSpaceOnUse" x1="1184.73" y1="540.42" x2="1186.27" y2="534.10"><stop offset="0" stop-color="#464f5b"/><stop offset="0.25" stop-color="#5c6876"/><stop offset="0.58" stop-color="#77848f"/><stop offset="0.82" stop-color="#b2becb"/><stop offset="1" stop-color="#8f9cab"/></linearGradient><linearGradient id="g29" gradientUnits="userSpaceOnUse" x1="1183.55" y1="396.70" x2="1185.45" y2="388.93"><stop offset="0" stop-color="#404854"/><stop offset="0.2" stop-color="#4d5866"/><stop offset="0.45" stop-color="#5f6c7c"/><stop offset="0.62" stop-color="#8a97a9"/><stop offset="0.8" stop-color="#606d7d"/><stop offset="1" stop-color="#4a5361"/></linearGradient><linearGradient id="g30" gradientUnits="userSpaceOnUse" x1="1181.20" y1="0" x2="1189.80" y2="0"><stop offset="0" stop-color="#404751"/><stop offset="0.3" stop-color="#5a6675"/><stop offset="0.55" stop-color="#4f5a68"/><stop offset="1" stop-color="#3d444e"/></linearGradient><linearGradient id="g31" gradientUnits="userSpaceOnUse" x1="1432.70" y1="0" x2="1441.30" y2="0"><stop offset="0" stop-color="#404751"/><stop offset="0.3" stop-color="#5a6675"/><stop offset="0.55" stop-color="#4f5a68"/><stop offset="1" stop-color="#3d444e"/></linearGradient><linearGradient id="g32" gradientUnits="userSpaceOnUse" x1="1684.20" y1="0" x2="1692.80" y2="0"><stop offset="0" stop-color="#404751"/><stop offset="0.3" stop-color="#5a6675"/><stop offset="0.55" stop-color="#4f5a68"/><stop offset="1" stop-color="#3d444e"/></linearGradient><linearGradient id="g33" gradientUnits="userSpaceOnUse" x1="1183.63" y1="540.15" x2="1185.17" y2="533.83"><stop offset="0" stop-color="#464f5b"/><stop offset="0.25" stop-color="#5c6876"/><stop offset="0.58" stop-color="#77848f"/><stop offset="0.82" stop-color="#b2becb"/><stop offset="1" stop-color="#8f9cab"/></linearGradient><linearGradient id="g34" gradientUnits="userSpaceOnUse" x1="1183.45" y1="396.68" x2="1185.35" y2="388.91"><stop offset="0" stop-color="#404854"/><stop offset="0.2" stop-color="#4d5866"/><stop offset="0.45" stop-color="#5f6c7c"/><stop offset="0.62" stop-color="#8a97a9"/><stop offset="0.8" stop-color="#606d7d"/><stop offset="1" stop-color="#4a5361"/></linearGradient><linearGradient id="g35" gradientUnits="userSpaceOnUse" x1="1738.19" y1="494.85" x2="1731.81" y2="487.15"><stop offset="0" stop-color="#707070"/><stop offset="0.4" stop-color="#959595"/><stop offset="0.7" stop-color="#a6a6a6"/><stop offset="1" stop-color="#8e8e8e"/></linearGradient><linearGradient id="g36" gradientUnits="userSpaceOnUse" x1="1166.82" y1="357.86" x2="1169.18" y2="348.14"><stop offset="0" stop-color="#6c6c6c"/><stop offset="0.15" stop-color="#8a8a8a"/><stop offset="0.4" stop-color="#b4b4b4"/><stop offset="0.64" stop-color="#dedede"/><stop offset="0.82" stop-color="#c4c4c4"/><stop offset="1" stop-color="#8f8f8f"/></linearGradient></defs>
<polygon points="1165.4,545.0 1287.5,443.0 1851.0,583.0 1851.0,639.5 1729.0,741.5 1165.4,602.7" fill="#676666"/>
<polygon points="1165.4,545.0 1287.5,443.0 1851.0,583.0 1729.0,685.0" fill="#6c6a69"/>
<polygon points="1729.0,685.0 1851.0,583.0 1851.0,639.5 1729.0,741.5" fill="#313131"/>
<path d="M1728.1 683.4 L1850.1 581.4" stroke="#868482" stroke-width="2.4" fill="none"/>
<g stroke="#5b5958" fill="none" clip-path="url(#cTop)"><path d="M1334 521.3 L1745 622" stroke-width="5.2" stroke="#575554"/><path d="M1326 530 L1735 630.5" stroke-width="3.8" stroke="#595756"/><path d="M1228 554.5 L1334 521.3 M1216 562 L1326 530" stroke-width="3.2"/><path d="M1190 556 L1726 688" stroke-width="3"/><path d="M1209.5 559.4 l132 -27" stroke-width="1.6"/><path d="M1236.9 566.3 l132 -27" stroke-width="1.6"/><path d="M1264.3 573.1 l132 -27" stroke-width="1.6"/><path d="M1291.8 579.9 l132 -27" stroke-width="1.6"/><path d="M1319.2 586.7 l132 -27" stroke-width="1.6"/><path d="M1346.6 593.5 l132 -27" stroke-width="1.6"/><path d="M1374.0 600.3 l132 -27" stroke-width="1.6"/><path d="M1401.4 607.1 l132 -27" stroke-width="1.6"/><path d="M1461.0 621.9 l132 -27" stroke-width="1.6"/><path d="M1488.4 628.7 l132 -27" stroke-width="1.6"/><path d="M1515.8 635.5 l132 -27" stroke-width="1.6"/><path d="M1543.3 642.4 l132 -27" stroke-width="1.6"/><path d="M1570.7 649.2 l132 -27" stroke-width="1.6"/><path d="M1598.1 656.0 l132 -27" stroke-width="1.6"/><path d="M1625.5 662.8 l132 -27" stroke-width="1.6"/><path d="M1652.9 669.6 l132 -27" stroke-width="1.6"/><path d="M1706.6 682.9 l132 -27" stroke-width="1.6"/><path d="M1181.5 552.0 l140 -29" stroke-width="3.4"/><path d="M1433.0 614.5 l140 -29" stroke-width="3.4"/><path d="M1684.5 676.9 l140 -29" stroke-width="3.4"/><path d="M1745 622 L1840 545 M1735 630.5 L1832 552" stroke-width="3.4"/><path d="M1749.4 649.1 l-26 5" stroke-width="1.5"/><path d="M1765.2 636.0 l-26 5" stroke-width="1.5"/><path d="M1781.0 622.9 l-26 5" stroke-width="1.5"/><path d="M1796.8 609.8 l-26 5" stroke-width="1.5"/><path d="M1812.6 596.7 l-26 5" stroke-width="1.5"/><path d="M1828.4 583.6 l-26 5" stroke-width="1.5"/></g>
<g fill="#5a5959"><polygon points="1196.0,552.0 1729.0,684.4 1729.0,693.5 1196.0,561.1"/><polygon points="1191.5,551.5 1207.5,555.5 1207.5,610.5 1191.5,606.5"/><polygon points="1443.0,614.0 1459.0,617.9 1459.0,672.9 1443.0,669.0"/><polygon points="1694.5,676.4 1710.5,680.4 1710.5,735.4 1694.5,731.4"/></g>
<rect x="1748.3" y="514.9" width="2.2" height="144.2" fill="url(#g1)"/>
<rect x="1764.1" y="501.8" width="2.2" height="144.2" fill="url(#g2)"/>
<rect x="1779.9" y="488.7" width="2.2" height="144.2" fill="url(#g3)"/>
<rect x="1795.7" y="475.6" width="2.2" height="144.2" fill="url(#g4)"/>
<rect x="1811.5" y="462.5" width="2.2" height="144.2" fill="url(#g5)"/>
<rect x="1827.3" y="449.4" width="2.2" height="144.2" fill="url(#g6)"/>
<polygon points="1826.0,612.0 1842.0,598.0 1842.0,626.0 1826.0,640.0" fill="#3c424b"/>
<polygon points="1828.5,614.5 1837.5,606.5 1837.5,630.0 1828.5,638.0" fill="none" stroke="#626a76" stroke-width="1"/>
<polygon points="1733.1,668.1 1843.8,576.4 1848.2,581.6 1737.5,673.4" fill="url(#g7)"/>
<polygon points="1732.4,523.7 1843.4,431.7 1848.6,437.9 1737.6,529.9" fill="url(#g8)"/>
<rect x="1841.8" y="402.0" width="8.4" height="238.5" fill="url(#g9)"/>
<rect x="1214.4" y="400.4" width="2.2" height="144.2" fill="url(#g10)"/>
<rect x="1241.8" y="407.0" width="2.2" height="144.2" fill="url(#g11)"/>
<rect x="1269.2" y="413.7" width="2.2" height="144.2" fill="url(#g12)"/>
<rect x="1296.7" y="420.4" width="2.2" height="144.2" fill="url(#g13)"/>
<rect x="1324.1" y="427.1" width="2.2" height="144.2" fill="url(#g14)"/>
<rect x="1351.5" y="433.7" width="2.2" height="144.2" fill="url(#g15)"/>
<rect x="1378.9" y="440.4" width="2.2" height="144.2" fill="url(#g16)"/>
<rect x="1406.3" y="447.1" width="2.2" height="144.2" fill="url(#g17)"/>
<rect x="1465.9" y="461.6" width="2.2" height="144.2" fill="url(#g18)"/>
<rect x="1493.3" y="468.3" width="2.2" height="144.2" fill="url(#g19)"/>
<rect x="1520.7" y="474.9" width="2.2" height="144.2" fill="url(#g20)"/>
<rect x="1548.2" y="481.6" width="2.2" height="144.2" fill="url(#g21)"/>
<rect x="1575.6" y="488.3" width="2.2" height="144.2" fill="url(#g22)"/>
<rect x="1603.0" y="494.9" width="2.2" height="144.2" fill="url(#g23)"/>
<rect x="1630.4" y="501.6" width="2.2" height="144.2" fill="url(#g24)"/>
<rect x="1657.8" y="508.3" width="2.2" height="144.2" fill="url(#g25)"/>
<rect x="1711.5" y="521.4" width="2.2" height="144.2" fill="url(#g26)"/>
<rect x="1733.9" y="526.8" width="2.2" height="144.2" fill="url(#g27)"/>
<polygon points="1176.5,562.5 1182.5,564.0 1182.5,590.5 1176.5,589.0" fill="#525b66"/>
<polygon points="1190.5,566.0 1204.5,569.5 1204.5,595.5 1190.5,592.0" fill="#57606c"/>
<polygon points="1190.5,566.0 1204.5,569.5 1204.5,571.1 1190.5,567.6" fill="#6a737f"/>
<circle cx="1179.0" cy="576.5" r="0.9" fill="#2f3640"/><circle cx="1200.0" cy="581.5" r="0.9" fill="#2f3640"/>
<polygon points="1428.0,623.7 1434.0,625.2 1434.0,651.7 1428.0,650.2" fill="#525b66"/>
<polygon points="1442.0,627.2 1456.0,630.7 1456.0,656.7 1442.0,653.2" fill="#57606c"/>
<polygon points="1442.0,627.2 1456.0,630.7 1456.0,632.3 1442.0,628.8" fill="#6a737f"/>
<circle cx="1430.5" cy="637.7" r="0.9" fill="#2f3640"/><circle cx="1451.5" cy="642.7" r="0.9" fill="#2f3640"/>
<polygon points="1679.5,684.9 1685.5,686.4 1685.5,712.9 1679.5,711.4" fill="#525b66"/>
<polygon points="1693.5,688.4 1707.5,691.9 1707.5,717.9 1693.5,714.4" fill="#57606c"/>
<polygon points="1693.5,688.4 1707.5,691.9 1707.5,693.5 1693.5,690.0" fill="#6a737f"/>
<circle cx="1682.0" cy="698.9" r="0.9" fill="#2f3640"/><circle cx="1703.0" cy="703.9" r="0.9" fill="#2f3640"/>
<polygon points="1186.3,534.1 1736.4,668.0 1734.8,674.3 1184.7,540.4" fill="url(#g28)"/>
<polygon points="1185.4,388.9 1735.9,522.9 1734.1,530.7 1183.6,396.7" fill="url(#g29)"/>
<rect x="1181.2" y="360.8" width="8.6" height="239.7" fill="url(#g30)"/>
<rect x="1432.7" y="422.0" width="8.6" height="239.7" fill="url(#g31)"/>
<rect x="1684.2" y="483.2" width="8.6" height="239.7" fill="url(#g32)"/>
<polygon points="1185.2,533.8 1193.8,535.9 1192.2,542.2 1183.6,540.1" fill="url(#g33)"/>
<polygon points="1185.3,388.9 1193.9,391.0 1192.1,398.8 1183.5,396.7" fill="url(#g34)"/>
<ellipse cx="1184.4" cy="392.8" rx="1.3" ry="4.0" fill="#56616f"/>
<ellipse cx="1184.4" cy="537.0" rx="1.2" ry="3.2" fill="#7f8b99"/>
<polygon points="1733.7,485.5 1854.1,385.8 1860.5,393.4 1736.3,496.5" fill="url(#g35)"/>
<polygon points="1169.2,348.1 1733.7,485.5 1736.3,496.5 1166.8,357.9" fill="url(#g36)"/>
<ellipse cx="1168.2" cy="353" rx="1.2" ry="5" fill="#bdbdbd" transform="rotate(13.7 1168.2 353)"/>
<ellipse cx="1855.6" cy="392.2" rx="1.6" ry="5" fill="#8b8b8b" transform="rotate(-39 1855.6 392.2)"/>
<g fill="none" stroke="#000"><path d="M1420.6 253.2 l11.4 -11 l11.4 11" stroke-width="1.8"/><path d="M1423.4 251.5 v12 h6 v-8.4 h5.2 v8.4 h6 v-12" stroke-width="1.8"/><path d="M1464 254.5 h-6.5 v-13 h13.5 v5.5" stroke-width="1.3"/><path d="M1465.5 253.5 h5.5 v-5.5" stroke-width="1.2"/><circle cx="1469.7" cy="253.2" r="6.7" stroke-width="1.6"/><path d="M1475 258.4 l5.3 5.2" stroke-width="3.2"/><circle cx="1503.8" cy="250.1" r="8.6" stroke-width="2.2"/><path d="M1510.4 256.6 l6.6 6.6" stroke-width="4.2"/><path d="M1531.4 253 h23.2 M1543 241.4 v23.2" stroke-width="1.7"/><path d="M1535 249.3 l-3.7 3.7 l3.7 3.7 M1551 249.3 l3.7 3.7 l-3.7 3.7 M1539.3 245 l3.7 -3.7 l3.7 3.7 M1539.3 261 l3.7 3.7 l3.7 -3.7" stroke-width="1.7"/><path d="M1570.6 249.4 A10.4 10.4 0 1 1 1571.4 258" stroke-width="2"/><path d="M1570 243.4 v6.4 h6.4" stroke-width="2"/><path d="M1606 242.5 l5.6 5.6 M1628.6 242.5 l-5.6 5.6 M1606 263.4 l5.6 -5.6 M1628.6 263.4 l-5.6 -5.6" stroke-width="1.7"/><path d="M1610.8 242.3 h-5 v5 M1623.8 242.3 h5 v5 M1610.8 263.6 h-5 v-5 M1623.8 263.6 h5 v-5" stroke-width="1.7"/></g>
<rect x="1882.2" y="237.3" width="22" height="21.5" fill="#fff" stroke="#cfcfcf" stroke-width="1"/><path d="M1894.2 246.3 l6.2 -6.2 M1895.4 240.1 h5 v5" fill="none" stroke="#9a9a9a" stroke-width="1.5"/>
<ellipse cx="1858.8" cy="312.8" rx="37.5" ry="17" fill="none" stroke="#c9c9c9" stroke-width="8.5"/><g font-weight="700" font-size="11" fill="#484848" text-anchor="middle" font-style="italic"><text x="1826" y="299.6" transform="rotate(-20 1826 296)" font-size="11">W</text><text x="1833" y="333" transform="rotate(20 1833 333)" font-size="13">S</text><text x="1897.5" y="321" transform="rotate(14 1897.5 321)" font-size="11.5">E</text></g><g stroke="#f3a536" stroke-width="0.9" stroke-linejoin="round"><polygon points="1830.6,276.3 1852.4,265.2 1884.8,270.6 1869.2,283.9" fill="#514f50"/><polygon points="1830.6,276.3 1869.2,283.9 1867.4,322 1832.8,311" fill="#4a4849"/><polygon points="1869.2,283.9 1884.8,270.6 1883,304.6 1867.4,322" fill="#3f3d3e"/></g><text x="1849.8" y="303.4" font-size="8.6" font-weight="700" fill="#fff" text-anchor="middle" transform="rotate(14 1849.8 300)" textLength="24.5" lengthAdjust="spacingAndGlyphs">VORNE</text><text x="1858" y="276.6" font-size="5" fill="#e8e8e8" text-anchor="middle" transform="rotate(190 1858 275)">OBEN</text><text x="1876" y="297" font-size="5" fill="#e8e8e8" text-anchor="middle" transform="rotate(-52 1876 295.5)">RECHTS</text>
</svg>
<svg width="1920" height="1040" viewBox="0 0 1920 1040" style="left:0;top:0">
<rect x="1016.5" y="826.5" width="12" height="12" fill="#fff" stroke="#444" stroke-width="1"/><path d="M1018.6 832.4 l2.7 3 l4.9 -6.4" fill="none" stroke="#111" stroke-width="1.7"/>
<rect x="1016.5" y="846.5" width="12" height="12" fill="#fff" stroke="#444" stroke-width="1"/><path d="M1018.6 852.4 l2.7 3 l4.9 -6.4" fill="none" stroke="#111" stroke-width="1.7"/>
<rect x="1016.5" y="866.5" width="12" height="12" fill="#fff" stroke="#444" stroke-width="1"/><path d="M1018.6 872.4 l2.7 3 l4.9 -6.4" fill="none" stroke="#111" stroke-width="1.7"/>
<rect x="1016.5" y="886.5" width="12" height="12" fill="#fff" stroke="#444" stroke-width="1"/><path d="M1018.6 892.4 l2.7 3 l4.9 -6.4" fill="none" stroke="#111" stroke-width="1.7"/>
<rect x="1016.5" y="906.5" width="12" height="12" fill="#fff" stroke="#444" stroke-width="1"/><path d="M1018.6 912.4 l2.7 3 l4.9 -6.4" fill="none" stroke="#111" stroke-width="1.7"/>
<rect x="1016.5" y="926.5" width="12" height="12" fill="#fff" stroke="#444" stroke-width="1"/><path d="M1018.6 932.4 l2.7 3 l4.9 -6.4" fill="none" stroke="#111" stroke-width="1.7"/>
<rect x="1016.5" y="946.5" width="12" height="12" fill="#fff" stroke="#444" stroke-width="1"/><path d="M1018.6 952.4 l2.7 3 l4.9 -6.4" fill="none" stroke="#111" stroke-width="1.7"/>
<rect x="1016.5" y="966.5" width="12" height="12" fill="#fff" stroke="#444" stroke-width="1"/><path d="M1018.6 972.4 l2.7 3 l4.9 -6.4" fill="none" stroke="#111" stroke-width="1.7"/>
<rect x="1016.5" y="1014.5" width="12" height="12" fill="#fff" stroke="#444" stroke-width="1"/><path d="M1018.6 1020.4 l2.7 3 l4.9 -6.4" fill="none" stroke="#111" stroke-width="1.7"/>
<circle cx="1115" cy="805.4" r="9" fill="#fff" stroke="#222" stroke-width="1.25"/><path d="M1113.5 802 l3.4 3.4 l-3.4 3.4" fill="none" stroke="#1a1a1a" stroke-width="2"/>
<circle cx="1903.4" cy="536.5" r="9" fill="#fff" stroke="#222" stroke-width="1.25"/><path d="M1901.9 533.1 l3.4 3.4 l-3.4 3.4" fill="none" stroke="#1a1a1a" stroke-width="2"/>
<rect x="1821.5" y="642.5" width="69" height="19" fill="none" stroke="#707070" stroke-width="1"/>
<path d="M1878.9 650.3 l3.9 3.3 l3.9 -3.3" fill="none" stroke="#111" stroke-width="2.1"/>
<rect x="1821.5" y="667.5" width="69" height="19" fill="none" stroke="#707070" stroke-width="1"/>
<path d="M1878.9 675.3 l3.9 3.3 l3.9 -3.3" fill="none" stroke="#111" stroke-width="2.1"/>
<rect x="1821.5" y="692.5" width="69" height="19" fill="none" stroke="#707070" stroke-width="1"/>
<path d="M1878.9 700.3 l3.9 3.3 l3.9 -3.3" fill="none" stroke="#111" stroke-width="2.1"/>
<rect x="1821.5" y="717.5" width="69" height="19" fill="none" stroke="#707070" stroke-width="1"/>
<path d="M1878.9 725.3 l3.9 3.3 l3.9 -3.3" fill="none" stroke="#111" stroke-width="2.1"/>
<rect x="1821.5" y="742.5" width="69" height="19" fill="none" stroke="#707070" stroke-width="1"/>
<path d="M1878.9 750.3 l3.9 3.3 l3.9 -3.3" fill="none" stroke="#111" stroke-width="2.1"/>
<rect x="1822.5" y="791.5" width="13" height="12" fill="#fff" stroke="#444" stroke-width="1"/><path d="M1825.1 797.4 l2.7 3 l4.9 -6.4" fill="none" stroke="#111" stroke-width="1.7"/>
<rect x="1822.5" y="806.5" width="13" height="12" fill="#fff" stroke="#444" stroke-width="1"/><path d="M1825.1 812.4 l2.7 3 l4.9 -6.4" fill="none" stroke="#111" stroke-width="1.7"/>
<rect x="1822.5" y="826.5" width="13" height="12" fill="#fff" stroke="#444" stroke-width="1"/><path d="M1825.1 832.4 l2.7 3 l4.9 -6.4" fill="none" stroke="#111" stroke-width="1.7"/>
<rect x="1822.5" y="841.5" width="13" height="12" fill="#fff" stroke="#444" stroke-width="1"/>
<rect x="1822.5" y="856.5" width="13" height="12" fill="#fff" stroke="#444" stroke-width="1"/>
<circle cx="1828" cy="905.5" r="5.6" fill="#fff" stroke="#3a3a3a" stroke-width="1"/><circle cx="1828" cy="905.5" r="2.8" fill="#111"/>
<circle cx="1828" cy="920.3" r="5.6" fill="#fff" stroke="#3a3a3a" stroke-width="1"/>
<circle cx="1828" cy="935" r="5.6" fill="#fff" stroke="#3a3a3a" stroke-width="1"/>
<circle cx="1828" cy="950" r="5.6" fill="#fff" stroke="#3a3a3a" stroke-width="1"/>
<circle cx="1828" cy="993" r="5.6" fill="#fff" stroke="#3a3a3a" stroke-width="1"/><circle cx="1828" cy="993" r="2.8" fill="#111"/>
<circle cx="1828" cy="1008" r="5.6" fill="#fff" stroke="#3a3a3a" stroke-width="1"/>
</svg>
<span class="t" style="left:1015px;top:805px;transform:scaleX(0.979);">Anzeigen</span>
<span class="t" style="left:1034.4px;top:827px;transform:scaleX(1.007);">Handlauf</span>
<span class="t" style="left:1034.4px;top:847px;transform:scaleX(1.008);">2. Obergurt</span>
<span class="t" style="left:1034.4px;top:867px;transform:scaleX(1.028);">Obergurt</span>
<span class="t" style="left:1034.4px;top:887px;transform:scaleX(0.983);">Füllung</span>
<span class="t" style="left:1034.4px;top:907px;transform:scaleX(1.036);">Untergurt</span>
<span class="t" style="left:1034.4px;top:927px;transform:scaleX(1.005);">2. Untergurt</span>
<span class="t" style="left:1034.4px;top:947px;transform:scaleX(0.968);">Pfosten</span>
<span class="t" style="left:1034.4px;top:967px;transform:scaleX(0.968);">Boden</span>
<span class="t" style="left:1015px;top:993px;transform:scaleX(0.947);">Bemaßung</span>
<span class="t" style="left:1034.4px;top:1015px;transform:scaleX(0.975);">Pfostenabstände</span>
<span class="t" style="left:1820.7px;top:627px;transform:scaleX(0.99);">Oberfläche</span>
<span class="t" style="left:1823.2px;top:646px;transform:scaleX(0.999);">Handlauf</span>
<span class="t" style="left:1823.2px;top:671px;transform:scaleX(0.966);">Gurte</span>
<span class="t" style="left:1823.2px;top:696px;transform:scaleX(0.973);">Füllung</span>
<span class="t" style="left:1823.2px;top:721px;transform:scaleX(0.954);">Pfosten</span>
<span class="t" style="left:1823.2px;top:746px;transform:scaleX(0.96);">Boden</span>
<span class="t" style="left:1820.9px;top:775px;transform:scaleX(0.981);">Anzeigen</span>
<span class="t" style="left:1841px;top:792px;transform:scaleX(0.968);">Geländer</span>
<span class="t" style="left:1841px;top:807px;transform:scaleX(0.941);">Decke</span>
<span class="t" style="left:1841px;top:827px;transform:scaleX(0.954);">Schatten</span>
<span class="t" style="left:1841px;top:842px;transform:scaleX(1.019);">Gitter</span>
<span class="t" style="left:1841px;top:857px;transform:scaleX(0.986);">Pfostenlinie</span>
<span class="t" style="left:1820.9px;top:883px;transform:scaleX(0.998);">Darstellung</span>
<span class="t" style="left:1840px;top:900px;transform:scaleX(1.018);">gerendert</span>
<span class="t" style="left:1840px;top:915px;transform:scaleX(1.006);">schattiert</span>
<span class="t" style="left:1840px;top:930px;transform:scaleX(0.992);">verdeckt</span>
<span class="t" style="left:1840px;top:945px;transform:scaleX(1.009);">Draht</span>
<span class="t" style="left:1821px;top:971px;transform:scaleX(1.001);">Projektion</span>
<span class="t" style="left:1840px;top:988px;transform:scaleX(0.937);">Parallel</span>
<span class="t" style="left:1840px;top:1003px;transform:scaleX(0.957);">Perspektive</span>
</div>
</body>
</html>
